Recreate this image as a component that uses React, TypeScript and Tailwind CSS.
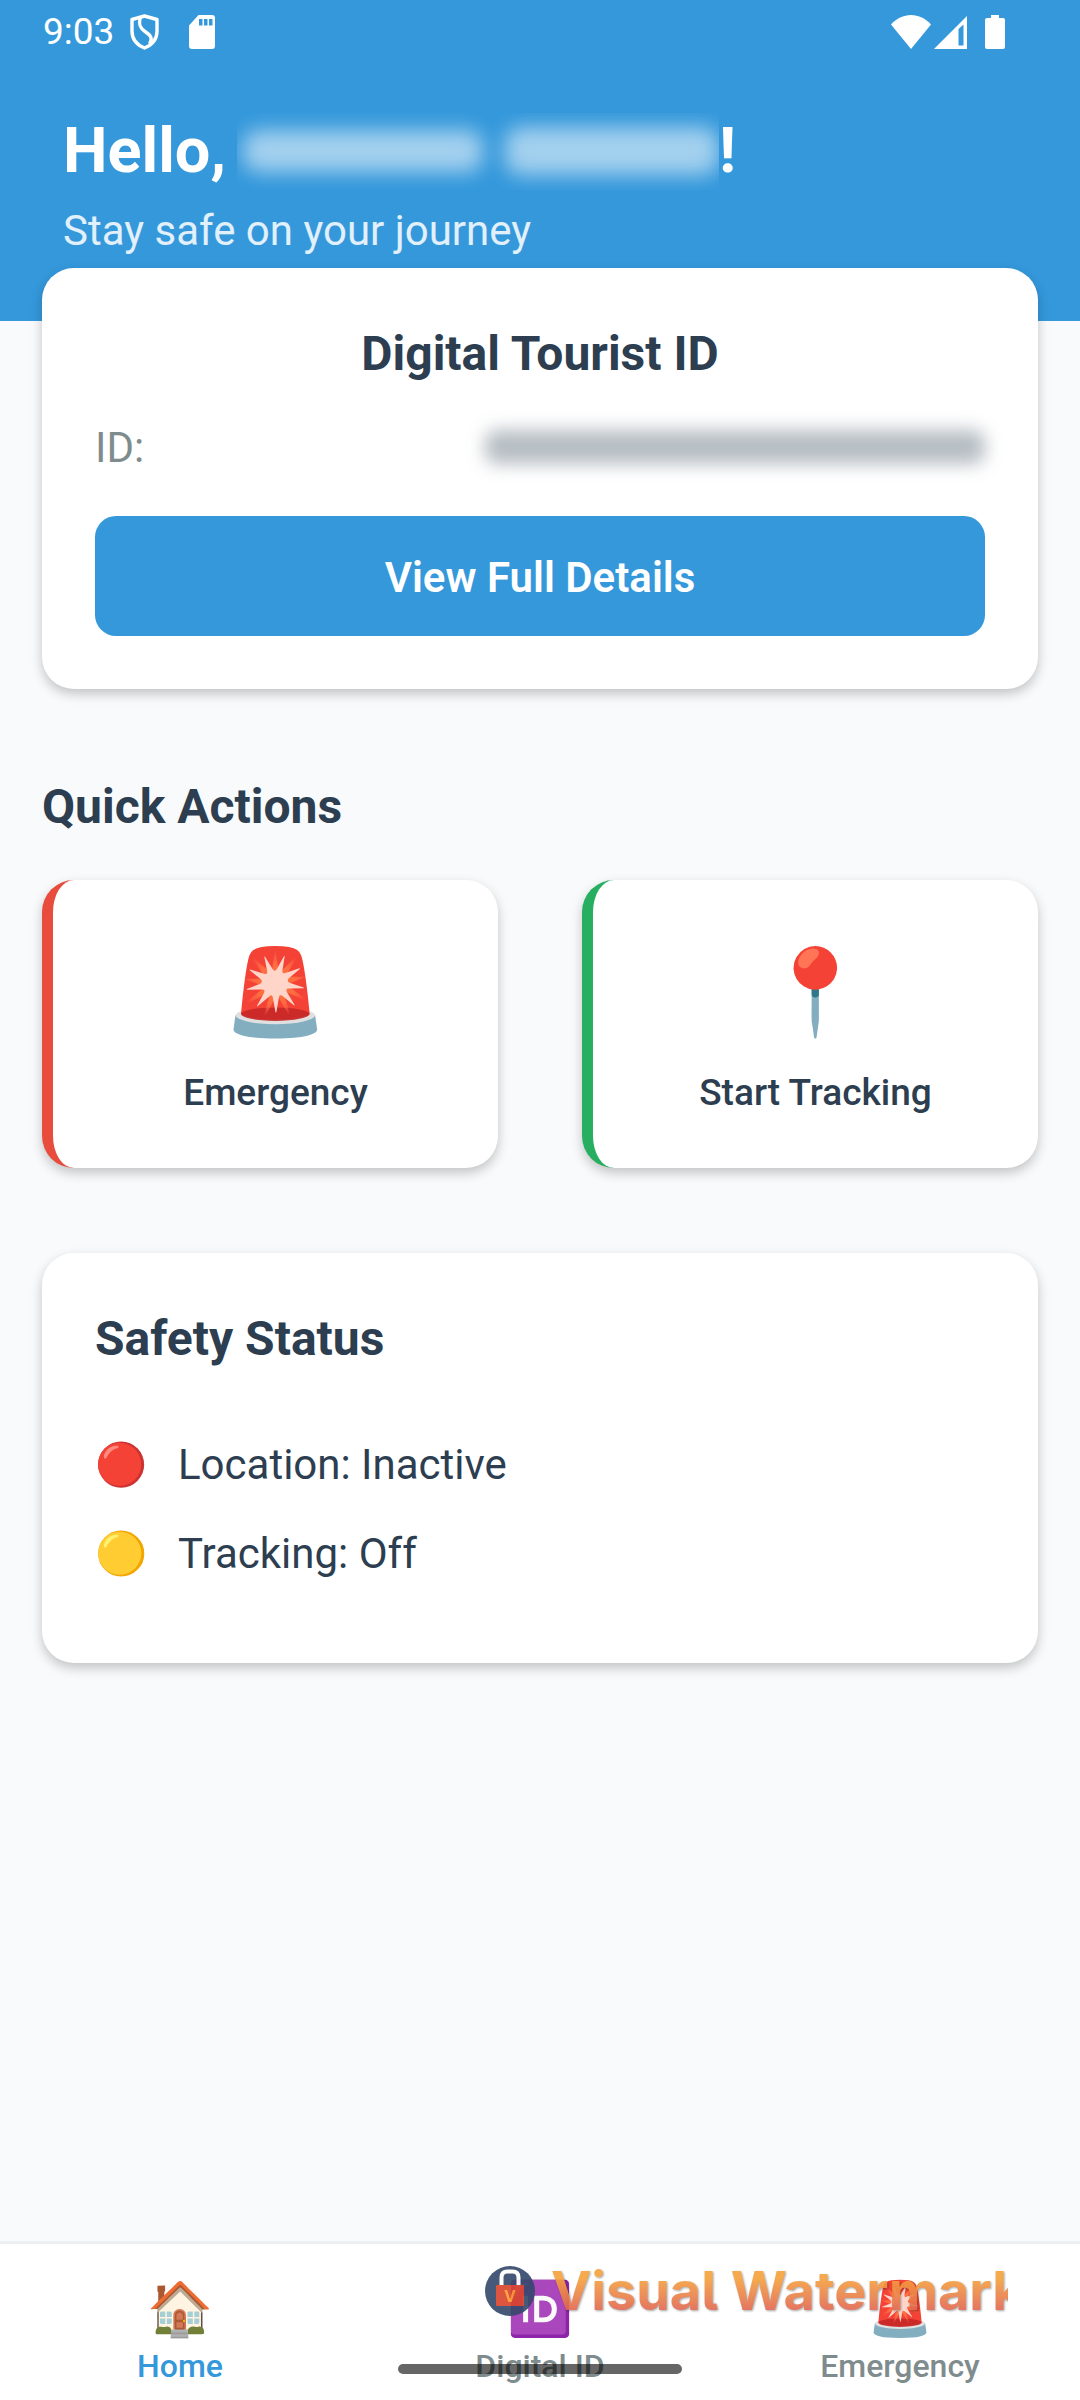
import type { ReactNode } from "react";

function ShieldIcon() {
  return (
    <svg viewBox="0 0 29 36" className="h-9 w-[29px]" fill="none" stroke="white" strokeWidth="3.4" aria-hidden="true">
      <path d="M14.500 2 27 5.500V17c0 8-5 14-12.500 17C7 31 2 25 2 17V5.500Z" strokeLinejoin="round" />
      <path d="M10.500 3c-2.500 8 0 11.500 4.500 14.500 6 4 8 7 4.500 12.500" />
    </svg>
  );
}

function SdCardIcon() {
  return (
    <svg viewBox="0 0 26 34" className="h-[34px] w-[26px]" aria-hidden="true">
      <path fill="white" fillRule="evenodd" d="M9.500 0H23a3 3 0 0 1 3 3v28a3 3 0 0 1-3 3H3a3 3 0 0 1-3-3V10.500ZM10 4v6.500h3.500V4Zm5 0v6.500h3.500V4Zm5 0v6.500h3.500V4Z" />
    </svg>
  );
}

function WifiIcon() {
  return (
    <svg viewBox="0 0 40 34" className="h-[34px] w-10" aria-hidden="true">
      <path fill="white" d="M20 34 0 9.500C5.500 3.500 12.500 0 20 0s14.500 3.500 20 9.500Z" />
    </svg>
  );
}

function SignalIcon() {
  return (
    <svg viewBox="0 0 33 33" className="h-[33px] w-[33px]" aria-hidden="true">
      <path fill="white" fillRule="evenodd" d="M33 0v33H0ZM24.500 13v16.500h5V8.500Z" />
    </svg>
  );
}

function BatteryIcon() {
  return (
    <svg viewBox="0 0 20 34" className="h-[34px] w-5" aria-hidden="true">
      <path fill="white" d="M6 0h8v3h4a2 2 0 0 1 2 2v27a2 2 0 0 1-2 2H2a2 2 0 0 1-2-2V5a2 2 0 0 1 2-2h4Z" />
    </svg>
  );
}

function StatusBar() {
  return (
    <div className="flex h-16 items-center justify-between pr-[75px] pl-[43px]">
      <div className="flex items-center">
        <time className="text-[37px] leading-[48px]">9:03</time>
        <span className="ml-4"><ShieldIcon /></span>
        <span className="ml-[30px]"><SdCardIcon /></span>
      </div>
      <div className="flex items-center">
        <WifiIcon />
        <span className="ml-[3px]"><SignalIcon /></span>
        <span className="ml-[18px]"><BatteryIcon /></span>
      </div>
    </div>
  );
}

function Card({ children }: { children: ReactNode }) {
  return (
    <section className="rounded-[32px] bg-white px-[53px] shadow-[0_5px_12px_rgba(0,0,0,0.22)]">{children}</section>
  );
}

function QuickAction({ label, icon, edge }: { label: string; icon: ReactNode; edge: string }) {
  return (
    <button
      type="button"
      className={`flex flex-1 flex-col items-center rounded-[32px] border-l-[11px] bg-white pt-[53px] pb-[52px] shadow-[0_5px_12px_rgba(0,0,0,0.22)] ${edge}`}
    >
      <span className="flex h-[120px] items-center text-[84px] leading-none">{icon}</span>
      <span className="mt-4 text-[37px] leading-[47px] font-medium">{label}</span>
    </button>
  );
}

function StatusRow({ icon, label }: { icon: ReactNode; label: string }) {
  return (
    <li className="flex h-[57px] items-center">
      <span className="flex w-[83px] text-[42px] leading-none">{icon}</span>
      <span className="text-[42px] leading-[57px]">{label}</span>
    </li>
  );
}

function NavItem({ icon, label, active }: { icon: ReactNode; label: string; active?: boolean }) {
  return (
    <a
      href="#"
      aria-current={active ? "page" : undefined}
      className={`flex flex-1 flex-col items-center text-[32px] leading-[42px] font-medium ${active ? "text-[#3498db]" : "text-[#7f8c8d]"}`}
    >
      <span className="flex h-[62px] items-center text-[53px] leading-none">{icon}</span>
      <span className="mt-[5px]">{label}</span>
    </a>
  );
}

function Watermark() {
  return (
    <div className="pointer-events-none absolute top-[15px] right-[72px] left-[485px] flex h-16 items-center overflow-hidden">
      <svg viewBox="0 0 50 50" className="h-[50px] w-[50px] shrink-0 opacity-90" aria-hidden="true">
        <circle cx="25" cy="25" r="25" fill="#34486a" />
        <path d="M16.500 22V11.500q0-6 6-6h5q6 0 6 6V22" fill="none" stroke="white" strokeWidth="4" />
        <rect x="11" y="19" width="28" height="21" rx="1" fill="#d9432a" />
        <text x="25" y="35.500" fill="#ff9d2e" fontSize="16" fontWeight="700" textAnchor="middle" fontFamily="Inter, sans-serif">V</text>
      </svg>
      <span className="ml-4 bg-linear-to-b from-[#f5a13a] from-30% to-[#dc5a52] to-90% bg-clip-text font-[Inter,sans-serif] text-[54px] leading-[64px] font-bold whitespace-nowrap text-transparent opacity-90 drop-shadow-[1px_1px_1px_rgba(0,0,0,0.4)] [font-feature-settings:'cv05']">
        Visual Watermark
      </span>
    </div>
  );
}

export default function App() {
  return (
    <div className="flex min-h-screen flex-col bg-[#f8fafb] font-[Roboto,sans-serif] text-[#2c3e50]">
      <header className="bg-[#3498db] pb-[63px] text-white">
        <StatusBar />
        <div className="px-[63px] pt-[46px]">
          <h1 className="flex h-[82px] items-center text-[63px] leading-[82px] font-bold">
            Hello,
            <span role="img" aria-label="Hidden name" className="ml-[11px] flex h-[77px] w-[482px] items-center gap-[22px] overflow-hidden pl-1.5">
              <span className="h-[42px] w-[240px] rounded-2xl bg-white/55 blur-[10px]" />
              <span className="h-[48px] flex-1 rounded-2xl bg-white/55 blur-[10px]" />
            </span>
            !
          </h1>
          <p className="mt-[11px] text-[42px] leading-[55px] text-white/85">Stay safe on your journey</p>
        </div>
      </header>

      <main className="-mt-[53px] px-[42px]">
        <Card>
          <h2 className="pt-[55px] text-center text-[48px] leading-[62px] font-bold">Digital Tourist ID</h2>
          <div className="mt-[32px] flex h-[60px] items-center justify-between text-[42px]">
            <span className="text-[#7f8c8d]">ID:</span>
            <span role="img" aria-label="Hidden ID" className="h-[34px] w-[500px] rounded-xl bg-[#2c3e50]/35 blur-[9px]" />
          </div>
          <div className="pt-[39px] pb-[53px]">
            <button type="button" className="h-[120px] w-full rounded-[21px] bg-[#3498db] pt-0.5 text-[42px] font-semibold text-white">
              View Full Details
            </button>
          </div>
        </Card>

        <h2 className="mt-[87px] text-[48px] leading-[62px] font-bold">Quick Actions</h2>
        <div className="mt-[42px] flex gap-[84px]">
          <QuickAction label="Emergency" edge="border-[#e74c3c]" icon="🚨" />
          <QuickAction label="Start Tracking" edge="border-[#27ae60]" icon="📍" />
        </div>

        <div className="mt-[85px]">
          <Card>
            <h2 className="pt-[55px] text-[48px] leading-[62px] font-bold">Safety Status</h2>
            <ul className="flex flex-col gap-8 pt-[66px] pb-[81px]">
              <StatusRow icon="🔴" label="Location: Inactive" />
              <StatusRow icon="🟡" label="Tracking: Off" />
            </ul>
          </Card>
        </div>
      </main>

      <nav className="relative mt-auto flex h-[159px] border-t-[3px] border-[#ecf0f1] bg-white pt-[34px]">
        <NavItem icon="🏠" label="Home" active />
        <NavItem icon="🆔" label="Digital ID" />
        <NavItem icon="🚨" label="Emergency" />
        <div className="pointer-events-none absolute inset-x-0 bottom-[26px] flex justify-center">
          <span className="h-[10px] w-[284px] rounded-full bg-black/60" />
        </div>
        <Watermark />
      </nav>
    </div>
  );
}
